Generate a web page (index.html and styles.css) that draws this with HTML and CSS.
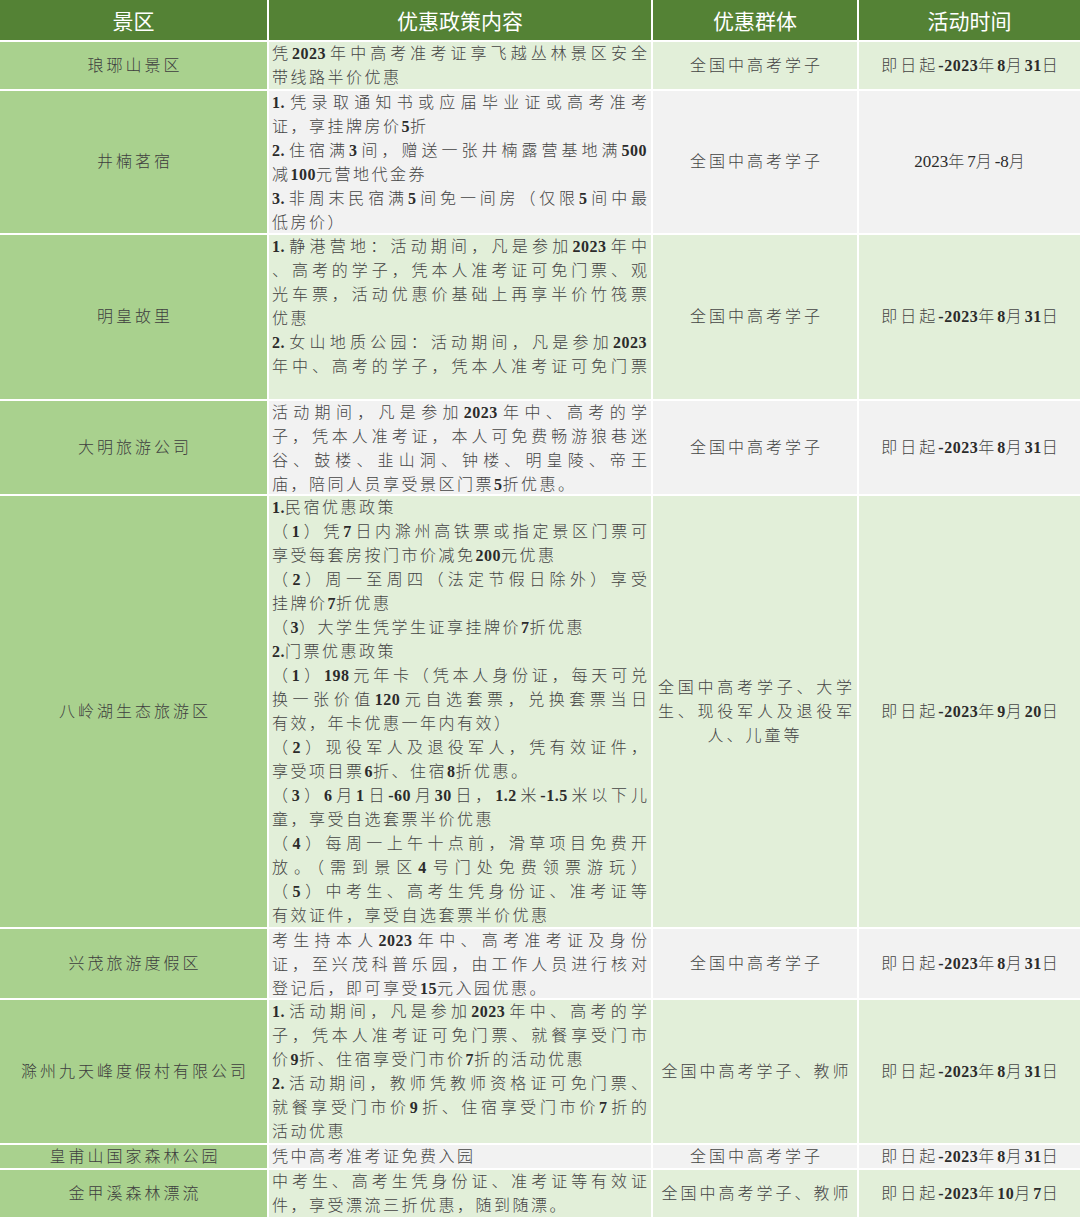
FILE: index.html
```html
<!DOCTYPE html>
<html lang="zh-CN">
<head>
<meta charset="utf-8">
<title>景区优惠政策</title>
<link rel="stylesheet" href="styles.css">
</head>
<body>
<div class="tbl">
  <div class="h">景区</div>
  <div class="h">优惠政策内容</div>
  <div class="h">优惠群体</div>
  <div class="h">活动时间</div>

  <div class="c name">琅琊山景区</div>
  <div class="c txt g">
    <div class="j">凭<b>2023</b>年中高考准考证享飞越丛林景区安全</div>
    <div>带线路半价优惠</div>
  </div>
  <div class="c mid g">全国中高考学子</div>
  <div class="c mid g">即日起<b>-2023</b>年<b>8</b>月<b>31</b>日</div>

  <div class="c name">井楠茗宿</div>
  <div class="c txt w">
    <div class="j"><b>1.</b>凭录取通知书或应届毕业证或高考准考</div>
    <div>证，享挂牌房价<b>5</b>折</div>
    <div class="j"><b>2.</b>住宿满<b>3</b>间，赠送一张井楠露营基地满<b>500</b></div>
    <div>减<b>100</b>元营地代金券</div>
    <div class="j"><b>3.</b>非周末民宿满<b>5</b>间免一间房（仅限<b>5</b>间中最</div>
    <div>低房价）</div>
  </div>
  <div class="c mid w">全国中高考学子</div>
  <div class="c mid w"><span class="rg">2023</span>年<span class="rg">7</span>月<span class="rg">-8</span>月</div>

  <div class="c name">明皇故里</div>
  <div class="c txt g">
    <div class="j"><b>1.</b>静港营地：活动期间，凡是参加<b>2023</b>年中</div>
    <div class="j">、高考的学子，凭本人准考证可免门票、观</div>
    <div class="j">光车票，活动优惠价基础上再享半价竹筏票</div>
    <div>优惠</div>
    <div class="j"><b>2.</b>女山地质公园：活动期间，凡是参加<b>2023</b></div>
    <div class="j">年中、高考的学子，凭本人准考证可免门票</div>
  </div>
  <div class="c mid g">全国中高考学子</div>
  <div class="c mid g">即日起<b>-2023</b>年<b>8</b>月<b>31</b>日</div>

  <div class="c name">大明旅游公司</div>
  <div class="c txt w">
    <div class="j">活动期间，凡是参加<b>2023</b>年中、高考的学</div>
    <div class="j">子，凭本人准考证，本人可免费畅游狼巷迷</div>
    <div class="j">谷、鼓楼、韭山洞、钟楼、明皇陵、帝王</div>
    <div>庙，陪同人员享受景区门票<b>5</b>折优惠。</div>
  </div>
  <div class="c mid w">全国中高考学子</div>
  <div class="c mid w">即日起<b>-2023</b>年<b>8</b>月<b>31</b>日</div>

  <div class="c name">八岭湖生态旅游区</div>
  <div class="c txt g">
    <div><b>1.</b>民宿优惠政策</div>
    <div class="j">（<b>1</b>）凭<b>7</b>日内滁州高铁票或指定景区门票可</div>
    <div>享受每套房按门市价减免<b>200</b>元优惠</div>
    <div class="j">（<b>2</b>）周一至周四（法定节假日除外）享受</div>
    <div>挂牌价<b>7</b>折优惠</div>
    <div>（<b>3</b>）大学生凭学生证享挂牌价<b>7</b>折优惠</div>
    <div><b>2.</b>门票优惠政策</div>
    <div class="j">（<b>1</b>）<b>198</b>元年卡（凭本人身份证，每天可兑</div>
    <div class="j">换一张价值<b>120</b>元自选套票，兑换套票当日</div>
    <div>有效，年卡优惠一年内有效）</div>
    <div class="j">（<b>2</b>）现役军人及退役军人，凭有效证件，</div>
    <div>享受项目票<b>6</b>折、住宿<b>8</b>折优惠。</div>
    <div class="j">（<b>3</b>）<b>6</b>月<b>1</b>日<b>-60</b>月<b>30</b>日，<b>1.2</b>米<b>-1.5</b>米以下儿</div>
    <div>童，享受自选套票半价优惠</div>
    <div class="j">（<b>4</b>）每周一上午十点前，滑草项目免费开</div>
    <div class="j">放。（需到景区<b>4</b>号门处免费领票游玩）</div>
    <div class="j">（<b>5</b>）中考生、高考生凭身份证、准考证等</div>
    <div>有效证件，享受自选套票半价优惠</div>
  </div>
  <div class="c mid g">
    <div class="grp">
      <div class="j">全国中高考学子、大学</div>
      <div class="j">生、现役军人及退役军</div>
      <div>人、儿童等</div>
    </div>
  </div>
  <div class="c mid g">即日起<b>-2023</b>年<b>9</b>月<b>20</b>日</div>

  <div class="c name">兴茂旅游度假区</div>
  <div class="c txt w">
    <div class="j">考生持本人<b>2023</b>年中、高考准考证及身份</div>
    <div class="j">证，至兴茂科普乐园，由工作人员进行核对</div>
    <div>登记后，即可享受<b>15</b>元入园优惠。</div>
  </div>
  <div class="c mid w">全国中高考学子</div>
  <div class="c mid w">即日起<b>-2023</b>年<b>8</b>月<b>31</b>日</div>

  <div class="c name">滁州九天峰度假村有限公司</div>
  <div class="c txt g">
    <div class="j"><b>1.</b>活动期间，凡是参加<b>2023</b>年中、高考的学</div>
    <div class="j">子，凭本人准考证可免门票、就餐享受门市</div>
    <div>价<b>9</b>折、住宿享受门市价<b>7</b>折的活动优惠</div>
    <div class="j"><b>2.</b>活动期间，教师凭教师资格证可免门票、</div>
    <div class="j">就餐享受门市价<b>9</b>折、住宿享受门市价<b>7</b>折的</div>
    <div>活动优惠</div>
  </div>
  <div class="c mid g">全国中高考学子、教师</div>
  <div class="c mid g">即日起<b>-2023</b>年<b>8</b>月<b>31</b>日</div>

  <div class="c name">皇甫山国家森林公园</div>
  <div class="c txt w">
    <div>凭中高考准考证免费入园</div>
  </div>
  <div class="c mid w">全国中高考学子</div>
  <div class="c mid w">即日起<b>-2023</b>年<b>8</b>月<b>31</b>日</div>

  <div class="c name">金甲溪森林漂流</div>
  <div class="c txt g">
    <div class="j">中考生、高考生凭身份证、准考证等有效证</div>
    <div>件，享受漂流三折优惠，随到随漂。</div>
  </div>
  <div class="c mid g">全国中高考学子、教师</div>
  <div class="c mid g">即日起<b>-2023</b>年<b>10</b>月<b>7</b>日</div>
</div>
</body>
</html>
```

FILE: styles.css
```css
html, body {
  margin: 0;
  padding: 0;
  background: #ffffff;
}

.tbl {
  display: grid;
  width: 1080px;
  height: 1217px;
  overflow: hidden;
  grid-template-columns: 267px 382px 204px 221px;
  grid-template-rows: 40px 47px 142px 164px 93px 431px 69px 143px 23px 47px;
  gap: 2px;
  font-family: "Liberation Serif", "Noto Sans CJK SC", serif;
  font-size: 16px;
  color: #454545;
  font-weight: 300;
}

.h {
  background: #548235;
  color: #ffffff;
  font-family: "Noto Sans CJK SC", "Noto Sans", sans-serif;
  font-size: 21px;
  font-weight: 400;
  display: flex;
  align-items: center;
  justify-content: center;
  line-height: 1;
}

.c {
  line-height: 24px;
  min-width: 0;
}

.name {
  background: #a9d18e;
  display: flex;
  align-items: center;
  justify-content: center;
  letter-spacing: 3px;
  padding-left: 3px;
  color: #3e3e3e;
}

.g { background: #e2efd9; }
.w { background: #f2f2f2; }

.txt {
  padding: 0 4px 0 3px;
  letter-spacing: 2.5px;
  overflow: visible;
}

.txt > div {
  white-space: nowrap;
}

.txt > .j {
  white-space: normal;
  text-align: justify;
  text-align-last: justify;
  text-justify: inter-character;
  height: 24px;
  overflow: hidden;
  letter-spacing: 0;
}

.mid {
  display: flex;
  align-items: center;
  justify-content: center;
  text-align: center;
  letter-spacing: 3px;
  padding-left: 3px;
}

.grp {
  width: 194px;
  margin-left: -3px;
}

.grp > div {
  height: 24px;
}

.grp > .j {
  text-align: justify;
  text-align-last: justify;
  text-justify: inter-character;
  letter-spacing: 0;
}

.grp > div:last-child {
  text-align: center;
}

b {
  font-weight: 700;
  color: #2b2b2b;
  letter-spacing: 0.5px;
}

.rg {
  font-weight: 400;
  color: #2b2b2b;
  letter-spacing: 0;
  font-size: 17px;
}
```
